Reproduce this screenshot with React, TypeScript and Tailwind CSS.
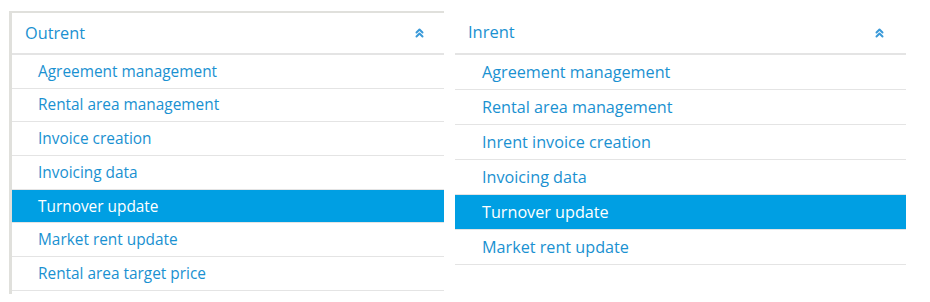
import React from "react";

const Chevrons = () => (
  <svg width="9" height="10" viewBox="0 0 9 10" fill="none" stroke="#3a9ad9" strokeWidth="2" strokeLinecap="round" strokeLinejoin="round">
    <path d="M1.5 4.5 L4.5 1.5 L7.5 4.5" />
    <path d="M1.5 8.5 L4.5 5.5 L7.5 8.5" />
  </svg>
);

type PanelProps = {
  title: string;
  items: string[];
  active: number;
};

const LeftPanel = ({ title, items, active }: PanelProps) => (
  <div className="mt-[11px] ml-[9px] w-[435px] border-l-[3px] border-t-2 border-[#e0e0dc] pb-[3px]">
    <div className="h-[42px] flex items-center justify-between pl-[13px] pr-[20px] border-b-2 border-[#e4e4e4]">
      <span className="text-[16.3px] text-[#1a91d1]">{title}</span>
      <Chevrons />
    </div>
    {items.map((it, i) => (
      <div
        key={it}
        className={
          i === active
            ? "h-[33.7px] flex items-center pl-[26px] text-[15.4px] bg-[#009fe3] text-white border-b border-[#e4e4e4]"
            : "h-[33.7px] flex items-center pl-[26px] text-[15.4px] text-[#1a91d1] border-b border-[#e4e4e4]"
        }
      >
        {it}
      </div>
    ))}
  </div>
);

const RightPanel = ({ title, items, active }: PanelProps) => (
  <div className="mt-[12px] ml-[11px] w-[451px]">
    <div className="h-[43px] flex items-center justify-between pl-[13px] pr-[22px] border-b-2 border-[#e4e4e4]">
      <span className="text-[16.5px] text-[#1a91d1]">{title}</span>
      <Chevrons />
    </div>
    {items.map((it, i) => (
      <div
        key={it}
        className={
          i === active
            ? "h-[35px] flex items-center pl-[27px] text-[16.2px] bg-[#009fe3] text-white border-b border-[#e4e4e4]"
            : "h-[35px] flex items-center pl-[27px] text-[16.2px] text-[#1a91d1] border-b border-[#e4e4e4]"
        }
      >
        {it}
      </div>
    ))}
  </div>
);

export default function App() {
  return (
    <div className="w-[930px] h-[302px] bg-white flex items-start" style={{ fontFamily: "'Open Sans', 'Noto Sans', sans-serif" }}>
      <LeftPanel
        title="Outrent"
        active={4}
        items={[
          "Agreement management",
          "Rental area management",
          "Invoice creation",
          "Invoicing data",
          "Turnover update",
          "Market rent update",
          "Rental area target price",
        ]}
      />
      <RightPanel
        title="Inrent"
        active={4}
        items={[
          "Agreement management",
          "Rental area management",
          "Inrent invoice creation",
          "Invoicing data",
          "Turnover update",
          "Market rent update",
        ]}
      />
    </div>
  );
}
